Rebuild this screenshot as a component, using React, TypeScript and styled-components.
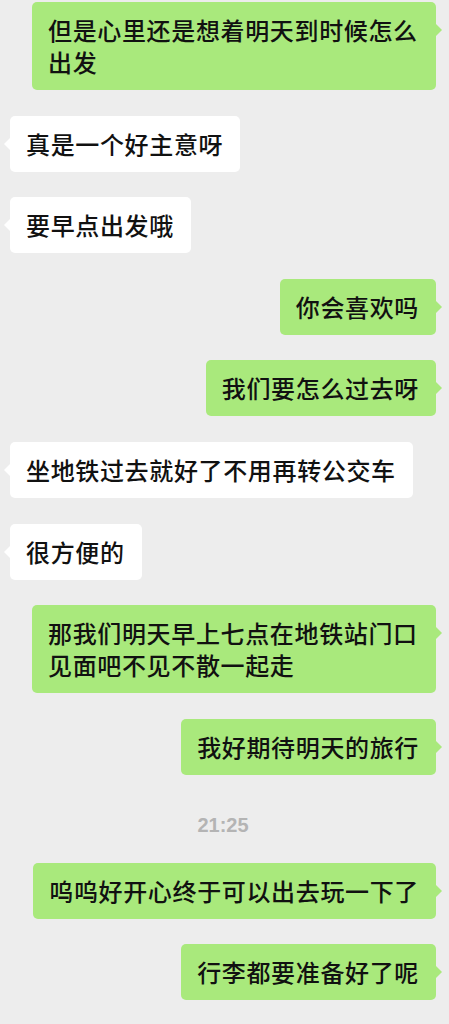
import styled, { createGlobalStyle } from "styled-components";

const GlobalStyle = createGlobalStyle`
  html, body {
    margin: 0;
    padding: 0;
    background: #ededed;
  }
  body {
    font-family: "Noto Sans CJK SC", "Noto Sans", sans-serif;
  }
`;

const Wrapper = styled.div`
  width: 449px;
  min-height: 1024px;
  background-color: #ededed;
  display: flex;
  flex-direction: column;
  gap: 25.6px;
  padding: 2px 13px 0 10px;
  box-sizing: border-box;
`;

const Row = styled.div<{ $mine: boolean }>`
  display: flex;
  justify-content: ${(p) => (p.$mine ? "flex-end" : "flex-start")};
`;

const Bubble = styled.div<{ $mine: boolean }>`
  position: relative;
  max-width: 404px;
  box-sizing: border-box;
  padding: 12px 17px 12px 16px;
  border-radius: 5px;
  background-color: ${(p) => (p.$mine ? "#a9e97c" : "#ffffff")};
  color: #111;
  font-size: 24px;
  font-weight: 500;
  line-height: 32px;
  letter-spacing: 0.65px;
  word-break: break-all;

  &::after {
    content: "";
    position: absolute;
    top: 22px;
    ${(p) => (p.$mine ? "right: -6px;" : "left: -6px;")}
    border-top: 6px solid transparent;
    border-bottom: 6px solid transparent;
    ${(p) =>
      p.$mine
        ? "border-left: 6px solid #a9e97c;"
        : "border-right: 6px solid #ffffff;"}
  }
`;

const Time = styled.div`
  margin-top: 12.6px;
  text-align: center;
  font-family: "Liberation Sans", sans-serif;
  font-size: 20px;
  font-weight: 700;
  line-height: 24px;
  color: #b4b4b4;
`;

type Msg = { mine: boolean; text: string } | { time: string };

// placeholder copy, same lengths as the original lines
const messages: Msg[] = [
  { mine: true, text: "但是心里还是想着明天到时候怎么出发" },
  { mine: false, text: "真是一个好主意呀" },
  { mine: false, text: "要早点出发哦" },
  { mine: true, text: "你会喜欢吗" },
  { mine: true, text: "我们要怎么过去呀" },
  { mine: false, text: "坐地铁过去就好了不用再转公交车" },
  { mine: false, text: "很方便的" },
  { mine: true, text: "那我们明天早上七点在地铁站门口见面吧不见不散一起走" },
  { mine: true, text: "我好期待明天的旅行" },
  { time: "21:25" },
  { mine: true, text: "呜呜好开心终于可以出去玩一下了" },
  { mine: true, text: "行李都要准备好了呢" },
];

export default function App() {
  return (
    <>
      <GlobalStyle />
      <Wrapper>
        {messages.map((m, i) =>
          "time" in m ? (
            <Time key={i}>{m.time}</Time>
          ) : (
            <Row key={i} $mine={m.mine}>
              <Bubble $mine={m.mine}>{m.text}</Bubble>
            </Row>
          )
        )}
      </Wrapper>
    </>
  );
}
